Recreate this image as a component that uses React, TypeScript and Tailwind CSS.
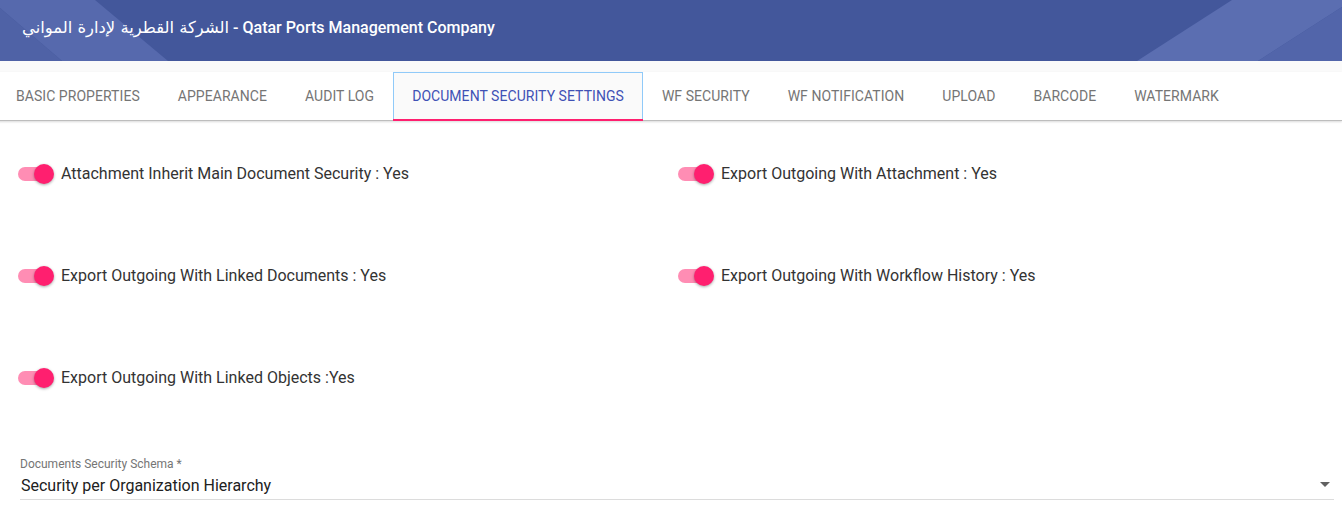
import React from "react";

const tabs = [
  "BASIC PROPERTIES",
  "APPEARANCE",
  "AUDIT LOG",
  "DOCUMENT SECURITY SETTINGS",
  "WF SECURITY",
  "WF NOTIFICATION",
  "UPLOAD",
  "BARCODE",
  "WATERMARK",
];

function Toggle() {
  return (
    <div className="relative w-[36px] h-[20px] shrink-0 flex items-center">
      <div className="w-[34px] h-[14px] rounded-full bg-[#ff8db4]" />
      <div className="absolute right-[0px] top-0 w-[20px] h-[20px] rounded-full bg-[#ff1f6f] shadow-[0_1px_3px_rgba(0,0,0,0.35)]" />
    </div>
  );
}

function ToggleRow({ label }: { label: string }) {
  return (
    <div className="h-[102px] flex items-center gap-[7px]">
      <Toggle />
      <span className="text-[16px] text-[#333333]">{label}</span>
    </div>
  );
}

export default function App() {
  return (
    <div
      className="w-[1342px] h-[511px] bg-white overflow-hidden"
      style={{ fontFamily: "Roboto, 'DejaVu Sans', sans-serif" }}
    >
      {/* Header */}
      <div className="relative h-[61px] bg-[#43579b] overflow-hidden">
        <svg
          className="absolute inset-0"
          width="1342"
          height="61"
          viewBox="0 0 1342 61"
        >
          <polygon points="0,0 95,0 168,61 62,61 0,8" fill="#5669ad" />
          <polygon points="0,8 62,61 0,61" fill="#4f62a6" />
          <polygon points="1232,0 1342,0 1342,7 1258,61 1137,61" fill="#5b6eb1" />
          <polygon points="1342,7 1342,61 1258,61" fill="#5265aa" />
        </svg>
        <div className="relative pl-[22px] pt-[17px] text-white text-[16px] leading-[22px] font-medium flex items-baseline whitespace-nowrap">
          <span
            className="text-[16.4px] font-normal"
            style={{ fontFamily: "'DejaVu Sans', sans-serif" }}
          >
            الشركة القطرية لإدارة المواني
          </span>
          <span className="ml-[4px]">- Qatar Ports Management Company</span>
        </div>
      </div>

      {/* Tabs */}
      <div className="bg-[#fafafa] pt-[11px]">
        <div className="bg-white h-[49px] flex ml-[-3px] border-b border-[#bdbdbd] shadow-[0_1px_2px_rgba(0,0,0,0.15)]">
          {tabs.map((t, i) =>
            i === 3 ? (
              <div
                key={t}
                className="h-[48px] px-[18px] flex items-center bg-[#fafafa] border border-b-0 border-[#90caf9] relative text-[14px] tracking-[0.05px] text-[#3f51b5]"
              >
                {t}
                <div className="absolute left-[-1px] right-[-1px] bottom-[-1px] h-[2px] bg-[#ff1f6f]" />
              </div>
            ) : (
              <div
                key={t}
                className="h-[48px] px-[19px] flex items-center text-[14px] tracking-[0.05px] text-[#757575]"
              >
                {t}
              </div>
            )
          )}
        </div>
      </div>

      {/* Content */}
      <div className="pl-[18px] pt-[2px]">
        <div className="grid grid-cols-[660px_1fr]">
          <ToggleRow label="Attachment Inherit Main Document Security : Yes" />
          <ToggleRow label="Export Outgoing With Attachment : Yes" />
          <ToggleRow label="Export Outgoing With Linked Documents : Yes" />
          <ToggleRow label="Export Outgoing With Workflow History : Yes" />
          <ToggleRow label="Export Outgoing With Linked Objects :Yes" />
          <div />
        </div>

        <div className="mt-[28px] ml-[2px] mr-[8px]">
          <div className="text-[12px] leading-[14px] text-[#757575]">
            Documents Security Schema *
          </div>
          <div className="flex items-end justify-between border-b border-[#dcdcdc] h-[29px] pb-[1px]">
            <span className="text-[16px] leading-[24px] text-[#212121] ml-[1px]">
              Security per Organization Hierarchy
            </span>
            <svg width="10" height="5" viewBox="0 0 10 5" className="mr-[4px] self-center">
              <polygon points="0,0 10,0 5,5" fill="#616161" />
            </svg>
          </div>
        </div>
      </div>
    </div>
  );
}
